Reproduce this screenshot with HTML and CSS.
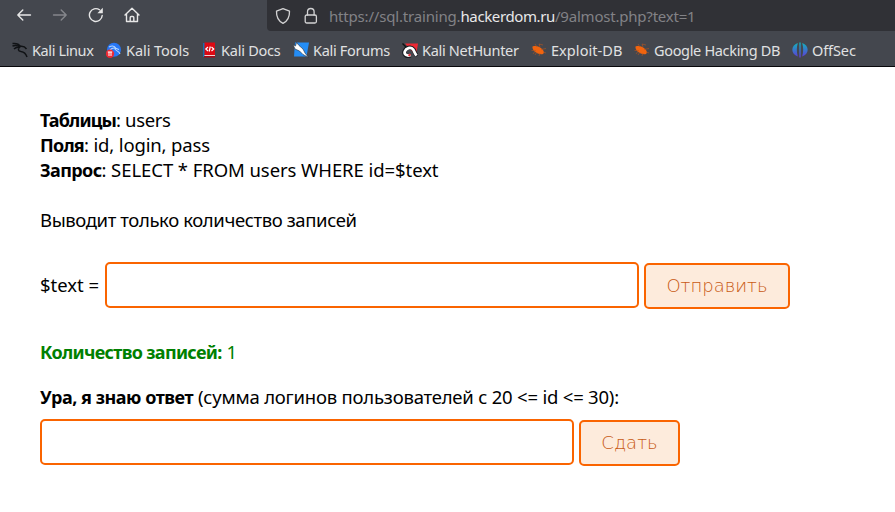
FILE: index.html
```
<!DOCTYPE html>
<html lang="ru">
<head>
<meta charset="utf-8">
<title>hackerdom.ru</title>
<link rel="stylesheet" href="styles.css">
</head>
<body>
<header class="browser">
  <div class="toolbar">
    <nav class="controls">
      <svg width="16" height="16" viewBox="0 0 16 16" class="line"><path d="M14.500 8H1.800M6.800 3 1.800 8 6.800 13"/></svg>
      <svg width="16" height="16" viewBox="0 0 16 16" class="line dim"><path d="M1.500 8h12.700M9.200 3 14.200 8 9.200 13"/></svg>
      <svg width="16" height="16" viewBox="0 0 16 16" class="line"><path d="M14.200 8.500A6.400 6.400 0 1 1 11.500 2.800"/><path class="solid" d="M14.800.8v5.400H9.400z"/></svg>
      <svg width="16" height="16" viewBox="0 0 16 16" class="line"><path d="M1 8 8 1.300 15 8M2.500 7v7.500h11V7M6.200 14.500v-4q0-1 1-1h1.600q1 0 1 1v4"/></svg>
    </nav>
    <div class="address">
      <svg width="16" height="18" viewBox="0 0 16 18" class="line"><path d="M8 1.600 14.500 4.200c.2 5-1.400 9.500-6.500 12.200C2.900 13.700 1.300 9.200 1.500 4.200z"/></svg>
      <svg width="14" height="18" viewBox="0 0 14 18" class="line"><rect x="1.200" y="8" width="11.200" height="8" rx="1.500"/><path d="M3.500 8V4.800a3.300 3.300 0 0 1 6.600 0V8"/></svg>
      <div class="url"><span class="sub">https://sql.training.</span><span class="domain">hackerdom.ru</span><span class="path">/9almost.php?text=1</span></div>
    </div>
  </div>
  <nav class="bookmarks">
    <a class="linux"><svg width="16" height="16" viewBox="0 0 16 16"><path d="M.5 1.500C5 1 7 2 8.500 4.500M.5 4C4 3 6 3.500 8 5M2 7C4 5 6 5 8 5.500M8 4.500c3-.5 5 .3 6.500 2.500M8 5c-2.500 2-2 4 1 4.500 3.500.5 5 2.500 6 5.500" class="dragon"/></svg><span>Kali Linux</span></a>
    <a class="tools"><svg width="16" height="16" viewBox="0 0 16 16"><circle cx="8" cy="7.800" r="7" fill="#2777f5"/><path d="M3 5c4-2 6-.5 7 1.500M4 8c3-3 5-2 9-.5M9 6c-1 3 4 2 5 6" fill="none" stroke="#b8d7ff" stroke-width="1.100"/><circle cx="4" cy="11.700" r="4.200" fill="#ed2932"/><path d="M1.800 10h4.400M3 10v4M5 10v4" stroke="#fff" fill="none"/></svg><span>Kali Tools</span></a>
    <a class="docs"><svg width="16" height="16" viewBox="0 0 16 16"><path d="M2 1h2v14H2z" fill="#176fac"/><path d="M3.500.5H14V13H3.500z" fill="#dc0913"/><path d="M3.500 13H14v1H3.500z" fill="#f2cfd0"/><path d="M3 14h11v1.500H3z" fill="#a70814"/><path d="M7 5 4.800 7 7 9M10.500 5l2.200 2-2.200 2M9.300 4.500 8.200 9.500" fill="none" stroke="#fff" stroke-width="1.200"/></svg><span>Kali Docs</span></a>
    <a class="forums"><svg width="16" height="16" viewBox="0 0 16 16"><path d="M2 .5h14L13.500 14.500H1z" fill="#248df5"/><path d="M0 2.500 2.500 4 3.500.5 6 3.500 10 7 12 11 15.500 15.500 10 12.500 6.500 9 2 7z" fill="#fff" stroke="#252c35" stroke-width=".6"/></svg><span>Kali Forums</span></a>
    <a class="hunter"><svg width="16" height="16" viewBox="0 0 16 16"><path d="M3 1.500h13L14 14z" fill="#ee2934"/><path d="M.5 1.500 4 5" stroke="#111" stroke-width="1.500"/><path d="M8.500 13.500C4.500 15 1.500 12.500 2.500 9.500c1.200-3.800 6.500-5.500 9-2 1.300 2 1.500 4 3.500 6.500" fill="none" stroke="#15191e" stroke-width="4.200"/><path d="M8.500 13C5 14.500 1.800 12.500 2.800 9.500c1.200-3.500 6-5 8.500-1.800 1.200 2 1.500 3.800 3.300 5.800" fill="none" stroke="#fff" stroke-width="2.700"/><path d="M6.500 13.800l2-1.500" stroke="#ee2934" stroke-width="2"/></svg><span>Kali NetHunter</span></a>
    <a class="exploit"><svg width="16" height="16" viewBox="0 0 16 16" class="bug"><path d="M1.500 4.500C5 3.200 9 4.500 11.500 7.500c1.500 1.500 2 3.500.5 4.500-3 .7-6-.5-8-2.300-2-1.700-2.800-3.700-2.500-5.200z"/><path d="M.5 8.500h4L2 12M6 5 4 2M9 5 8 2l4 1M10 7.500l5-1M12 10l3 1M9 11l-1 3M6 10l-2 3"/></svg><span>Exploit-DB</span></a>
    <a class="google"><svg width="16" height="16" viewBox="0 0 16 16" class="bug"><path d="M1.500 4.500C5 3.200 9 4.500 11.500 7.500c1.500 1.500 2 3.500.5 4.500-3 .7-6-.5-8-2.300-2-1.700-2.800-3.700-2.500-5.200z"/><path d="M.5 8.500h4L2 12M6 5 4 2M9 5 8 2l4 1M10 7.500l5-1M12 10l3 1M9 11l-1 3M6 10l-2 3"/></svg><span>Google Hacking DB</span></a>
    <a class="offsec"><svg width="16" height="16" viewBox="0 0 16 16"><defs><linearGradient id="spectrum" x2="0" y2="1"><stop offset="0" stop-color="#10b5bb"/><stop offset="1" stop-color="#6138d8"/></linearGradient></defs><path fill="url(#spectrum)" d="M5.800 1C4.500 5 4.500 10 5.800 14.500-1.500 12-1.500 3.500 5.800 1zM10.200 1c1.300 4 1.300 9 0 13.500 7.300-2.500 7.300-11 0-13.500zM7.300.5h1.400v15H7.300z"/></svg><span>OffSec</span></a>
  </nav>
</header>
<main>
  <p><b class="tables">Таблицы</b><span class="tables-value">: users</span></p>
  <p><b class="fields">Поля</b><span class="fields-value">: id, login, pass</span></p>
  <p><b class="query">Запрос</b><span class="query-value">: SELECT * FROM users WHERE id=$text</span></p>
  <p class="note">Выводит только количество записей</p>
  <form class="request"><label for="text">$text =</label><input id="text" type="text"><button type="button" class="send">Отправить</button></form>
  <p class="result"><b>Количество записей:</b><span>1</span></p>
  <p class="answer-label"><b>Ура, я знаю ответ</b><span>(сумма логинов пользователей с 20 &lt;= id &lt;= 30):</span></p>
  <form class="answer"><input type="text"><button type="button" class="submit">Сдать</button></form>
</main>
</body>
</html>
```
FILE: styles.css
```
* { box-sizing: border-box; }
body { margin: 0; background: #fff; color: #000; font: 18.5px/25px "Noto Sans", sans-serif; overflow: hidden; }
svg { display: block; flex: none; }
.browser { height: 67px; background: #44474e; border-bottom: 1px solid #08080b; color: #e0e1e2; }
.toolbar { display: flex; height: 31px; }
.controls { display: flex; gap: 20px; width: 267px; padding: 7px 0 0 16px; }
.line { fill: none; stroke: #e7e7e7; stroke-width: 1.4; stroke-linejoin: round; stroke-linecap: round; }
.dim { stroke: #85878c; }
.solid { fill: #e7e7e7; stroke: none; }
.address { flex: 1; display: flex; align-items: center; padding-left: 8px; background: #303136; border-bottom-left-radius: 4px; }
.address .line { stroke: #d2d2d3; stroke-width: 1.3; }
.address .line + .line { margin-left: 13px; }
.url { display: flex; margin-left: 11px; font-size: 15px; line-height: 20px; color: #828286; white-space: nowrap; }
.sub { letter-spacing: -.18px; }
.domain { color: #e8e8e9; letter-spacing: -.38px; }
.path { letter-spacing: -.21px; }
.bookmarks { display: grid; grid-template-columns: 94px 95px 92px 109px 129px 103px 158px auto; align-items: center; height: 32px; margin-top: 3px; padding: 0 0 1px 12px; font-size: 14.5px; line-height: 20px; }
.bookmarks a { display: flex; align-items: center; gap: 4px; white-space: nowrap; }
.linux span { letter-spacing: -.38px; }
.tools span { letter-spacing: -.06px; }
.docs span { letter-spacing: -.24px; }
.forums span { letter-spacing: -.3px; }
.hunter span { letter-spacing: -.3px; }
.exploit span { letter-spacing: .06px; }
.google span { letter-spacing: -.33px; }
.offsec span { letter-spacing: -.1px; }
.dragon { fill: none; stroke: #101215; stroke-width: 1.5; }
.bug { fill: #f0640f; }
.bug path + path { fill: none; stroke: #b7551f; stroke-width: .6; }
main { padding: 40px 40px 0; }
p { height: 25px; margin: 0; white-space: nowrap; }
b { font-size: 18px; line-height: 20px; }
.tables { letter-spacing: -.86px; }
.tables-value { letter-spacing: -.35px; }
.fields { letter-spacing: -.75px; }
.fields-value { letter-spacing: -.15px; }
.query { letter-spacing: -.61px; }
.query-value { letter-spacing: -.07px; }
.note { margin-top: 25px; letter-spacing: -.39px; }
form { display: flex; align-items: flex-start; }
.request { margin-top: 30px; }
label { width: 65px; padding-top: 10px; }
input { width: 534px; height: 46px; margin: 0; border: 2px solid #fa6400; border-radius: 5px; background: #fff; }
button { height: 46px; margin: 1px 0 0 5px; padding: 0 0 2px; border: 2px solid #fa6400; border-radius: 5px; background: #fdebdc; color: #c85a14; font: 200 18px "DejaVu Sans", sans-serif; }
.send { width: 146px; }
.submit { width: 101px; }
.result { display: flex; align-items: baseline; gap: 5px; margin-top: 30px; color: #008000; }
.result b { letter-spacing: -.68px; }
.answer-label { display: flex; align-items: baseline; gap: 5px; margin-top: 20px; }
.answer-label b { letter-spacing: -.47px; }
.answer-label span { letter-spacing: -.21px; }
.answer { margin-top: 10px; }
```
